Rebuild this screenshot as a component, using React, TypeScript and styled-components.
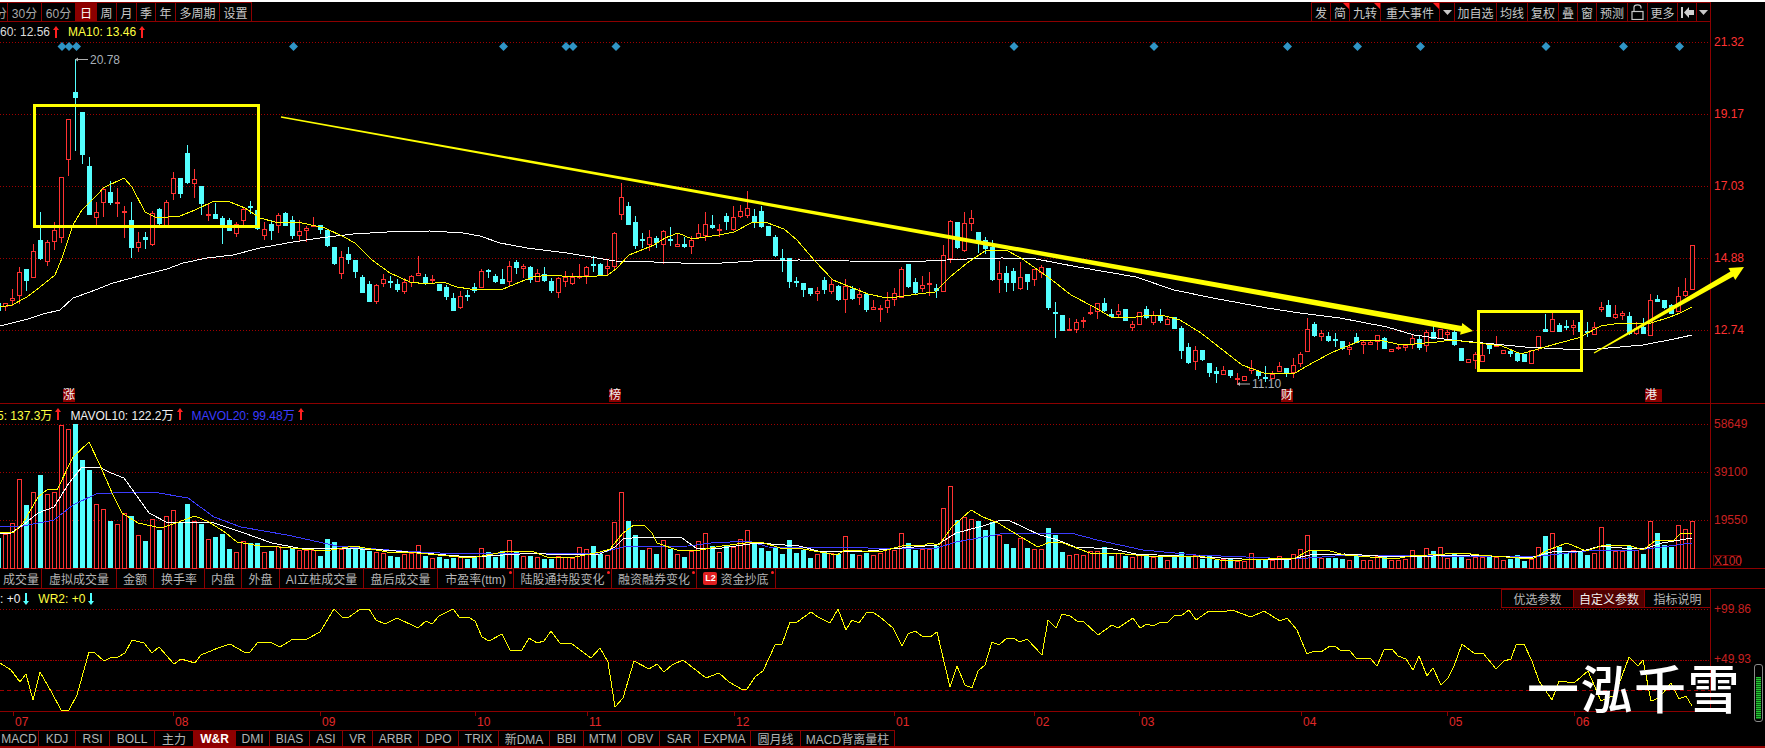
import React from "react";
import styled, { createGlobalStyle } from "styled-components";

const RED_LINE = "#8c0000";
const CANDLE_RED = "#ff3232";
const CANDLE_CYAN = "#54ffff";
const FONT = `"Liberation Sans", "Noto Sans CJK SC", sans-serif`;

const GlobalStyle = createGlobalStyle`
  html, body {
    margin: 0;
    padding: 0;
    background: #000;
  }
  * {
    box-sizing: border-box;
  }
`;

const Page = styled.div`
  position: relative;
  width: 1765px;
  height: 748px;
  overflow: hidden;
  background: #000;
  font-family: ${FONT};
  font-size: 12px;
  color: #c8c8c8;
  display: flex;
  flex-direction: column;
`;

const TopStrip = styled.div`
  height: 2px;
  background: #fff;
`;

const Toolbar = styled.div`
  width: 1711px;
  height: 20px;
  display: flex;
  justify-content: space-between;
  border-right: 1px solid ${RED_LINE};
  border-bottom: 1px solid ${RED_LINE};
`;

const ToolGroup = styled.div`
  display: flex;
  border-top: 1px solid ${RED_LINE};
`;

const ToolButton = styled.div<{ $w: number; $active?: boolean; $flag?: boolean; $dim?: boolean; $clip?: boolean }>`
  position: relative;
  width: ${(p) => p.$w}px;
  display: flex;
  align-items: center;
  justify-content: ${(p) => (p.$clip ? "flex-end" : "center")};
  overflow: hidden;
  white-space: nowrap;
  border-left: ${(p) => (p.$clip ? "none" : `1px solid ${RED_LINE}`)};
  background: ${(p) => (p.$active ? "#8c0000" : "transparent")};
  color: ${(p) => (p.$active ? "#fff" : p.$dim ? "#a8a8a8" : "#c8c8c8")};
  &::after {
    content: "";
    display: ${(p) => (p.$flag ? "block" : "none")};
    position: absolute;
    top: 0;
    right: 0;
    border-top: 6px solid #ff1e1e;
    border-left: 6px solid transparent;
  }
`;

const PanelRow = styled.div<{ $h: number; $line?: boolean }>`
  position: relative;
  height: ${(p) => p.$h}px;
  display: flex;
  border-bottom: ${(p) => (p.$line ? `1px solid ${RED_LINE}` : "none")};
`;

const PlotColumn = styled.div<{ $closed?: boolean }>`
  position: relative;
  width: 1711px;
  display: flex;
  flex-direction: column;
  border-right: 1px solid ${RED_LINE};
  border-bottom: ${(p) => (p.$closed ? `1px solid ${RED_LINE}` : "none")};
`;

const Legend = styled.div<{ $h: number }>`
  height: ${(p) => p.$h}px;
  display: flex;
  align-items: center;
  gap: 9px;
  white-space: nowrap;
`;

const LegendSplit = styled(Legend)`
  justify-content: space-between;
`;

const LegendItems = styled.div<{ $shift?: number }>`
  display: flex;
  align-items: center;
  gap: 9px;
  margin-left: ${(p) => p.$shift ?? 0}px;
`;

const LegendItem = styled.span<{ $color: string }>`
  display: flex;
  align-items: center;
  gap: 3px;
  color: ${(p) => p.$color};
`;

const ParamGroup = styled.div`
  display: flex;
  height: 19px;
  border-bottom: 1px solid ${RED_LINE};
  border-top: 1px solid ${RED_LINE};
`;

const ParamButton = styled.div<{ $w: number; $active?: boolean }>`
  width: ${(p) => p.$w}px;
  display: flex;
  align-items: center;
  justify-content: center;
  border-left: 1px solid ${RED_LINE};
  background: ${(p) => (p.$active ? "#500000" : "transparent")};
  color: ${(p) => (p.$active ? "#f0f0f0" : "#b8b8b8")};
`;

const Plot = styled.svg`
  display: block;
  flex: none;
  overflow: visible;
`;

const AxisColumn = styled.div<{ $top: number; $step: number; $dim?: boolean }>`
  position: relative;
  flex: 1;
  padding-top: ${(p) => p.$top}px;
  padding-left: 3px;
  display: grid;
  grid-auto-rows: ${(p) => p.$step}px;
  line-height: 15px;
  color: ${(p) => (p.$dim ? "#c82020" : CANDLE_RED)};
`;

const UnitBox = styled.div`
  position: absolute;
  left: 2px;
  bottom: 2px;
  height: 11px;
  width: 28px;
  border: 1px solid #6a0000;
  line-height: 10px;
  color: #d02828;
  text-align: center;
`;

const MarkerTag = styled.div<{ $x: number }>`
  position: absolute;
  left: ${(p) => p.$x}px;
  top: 367px;
  width: 12px;
  height: 13px;
  background: #8c0000;
  color: #f4f4f4;
  font-size: 12px;
  line-height: 13px;
  text-align: center;
`;

const TabStrip = styled.div`
  display: flex;
  height: 21px;
  border-top: 1px solid ${RED_LINE};
  border-bottom: 1px solid ${RED_LINE};
`;

const BottomStrip = styled.div`
  display: flex;
  height: 16px;
`;

const Tab = styled.div<{ $w: number; $active?: boolean; $clip?: boolean; $dot?: boolean }>`
  position: relative;
  width: ${(p) => p.$w}px;
  display: flex;
  align-items: center;
  justify-content: ${(p) => (p.$clip ? "flex-end" : "center")};
  gap: 2px;
  overflow: hidden;
  white-space: nowrap;
  padding-right: ${(p) => (p.$clip ? 2 : 0)}px;
  border-right: 1px solid ${RED_LINE};
  background: ${(p) => (p.$active ? "#8c0000" : "transparent")};
  color: ${(p) => (p.$active ? "#fff" : "#b4b4b4")};
  font-weight: ${(p) => (p.$active ? 700 : 400)};
  &::after {
    content: "";
    display: ${(p) => (p.$dot ? "block" : "none")};
    position: absolute;
    top: 2px;
    right: 1px;
    width: 3px;
    height: 3px;
    border-radius: 50%;
    background: #ff1e1e;
  }
`;

const BottomTab = styled(Tab)`
  border-top: 1px solid ${RED_LINE};
`;

const LevelTwo = styled.span`
  width: 14px;
  height: 13px;
  margin-right: 1px;
  border-radius: 2px;
  background: #e02020;
  color: #fff;
  font-size: 9px;
  font-weight: 700;
  line-height: 13px;
  text-align: center;
`;

const DateRow = styled.div`
  position: relative;
  height: 18px;
`;

const DateTick = styled.div<{ $x: number }>`
  position: absolute;
  left: ${(p) => p.$x}px;
  top: 0;
  height: 16px;
  padding: 3px 0 0 2px;
  color: #e02828;
  line-height: 14px;
  &::before {
    content: "";
    position: absolute;
    left: 0;
    top: 0;
    width: 1px;
    height: 4px;
    background: ${RED_LINE};
  }
`;

const FooterLine = styled.div`
  height: 2px;
  background: #990000;
`;

const Watermark = styled.div`
  position: absolute;
  left: 1527px;
  top: 650px;
  font-family: "Noto Sans CJK SC", sans-serif;
  font-size: 52px;
  font-weight: 500;
  letter-spacing: 1.5px;
  line-height: 74px;
  color: #fff;
  white-space: nowrap;
`;

const Gauge = styled.div`
  position: absolute;
  left: 1754px;
  top: 664px;
  width: 9px;
  height: 58px;
  padding: 12px 1px 2px;
  border: 1px solid #8a8a8a;
  border-radius: 3px;
`;

const GaugeFill = styled.div`
  height: 100%;
  background: repeating-linear-gradient(to bottom, #22c832 0 1px, #0c5a14 1px 2px);
`;

// toolbar contents
const LEFT_TOOLS = [
  { t: "分", w: 7, clip: true, dim: true },
  { t: "30分", w: 34, dim: true },
  { t: "60分", w: 34, dim: true },
  { t: "日", w: 21, active: true },
  { t: "周", w: 20 },
  { t: "月", w: 20 },
  { t: "季", w: 19 },
  { t: "年", w: 20 },
  { t: "多周期", w: 44 },
  { t: "设置", w: 32 },
];

const RIGHT_TOOLS = [
  { t: "发", w: 19 },
  { t: "简", w: 19, flag: true },
  { t: "九转", w: 31, flag: true },
  { t: "重大事件", w: 59, flag: true },
];

const RIGHT_TOOLS_2 = [
  { t: "加自选", w: 42 },
  { t: "均线", w: 31 },
  { t: "复权", w: 31 },
  { t: "叠", w: 19 },
  { t: "窗", w: 19 },
  { t: "预测", w: 31 },
];

const VOL_TABS = [
  { t: "成交量", w: 42, clip: true },
  { t: "虚拟成交量", w: 75 },
  { t: "金额", w: 37 },
  { t: "换手率", w: 51 },
  { t: "内盘", w: 37 },
  { t: "外盘", w: 38 },
  { t: "AI立桩成交量", w: 84 },
  { t: "盘后成交量", w: 74 },
  { t: "市盈率(ttm)", w: 76, dot: true },
  { t: "陆股通持股变化", w: 98, dot: true },
  { t: "融资融券变化", w: 85, dot: true },
  { t: "资金抄底", w: 79, dot: true, l2: true },
];

const WR_TABS = [
  { t: "MACD", w: 39 },
  { t: "KDJ", w: 37 },
  { t: "RSI", w: 34 },
  { t: "BOLL", w: 45 },
  { t: "主力", w: 39 },
  { t: "W&R", w: 42, active: true },
  { t: "DMI", w: 34 },
  { t: "BIAS", w: 40 },
  { t: "ASI", w: 33 },
  { t: "VR", w: 30 },
  { t: "ARBR", w: 46 },
  { t: "DPO", w: 40 },
  { t: "TRIX", w: 40 },
  { t: "新DMA", w: 51 },
  { t: "BBI", w: 34 },
  { t: "MTM", w: 38 },
  { t: "OBV", w: 38 },
  { t: "SAR", w: 39 },
  { t: "EXPMA", w: 52 },
  { t: "圆月线", w: 50 },
  { t: "MACD背离量柱", w: 94 },
];

const DATES = [
  ["07", 13], ["08", 173], ["09", 320], ["10", 475], ["11", 587], ["12", 734],
  ["01", 894], ["02", 1034], ["03", 1139], ["04", 1301], ["05", 1447], ["06", 1574],
] as const;

const MARKERS = [["涨", 63], ["榜", 609], ["财", 1281], ["", 1650], ["港", 1645]] as const;

const DIAMONDS = [62, 69, 76.5, 293.5, 503.5, 566, 573, 616, 1014, 1154, 1287.5, 1357.5, 1420.5, 1546, 1623.5, 1679.5];

// daily bars, page pixels: high, body top, body bottom, low, 1 = up day. First one sits cut off at the left edge
const CANDLES: number[][] = [
  [303,303,310,310,0],
  [303,303,306,310,1],[289,298,300,305,1],[267,272,295,303,1],[269,269,280,290,0],[244,251,277,277,1],
  [212,240,258,259,0],[240,242,261,265,1],[222,230,241,249,1],[177,177,237,242,1],[119,119,159,175,1],
  [59,92,97,150,0],[112,112,154,163,0],[157,166,214,214,0],[202,212,217,225,1],[188,189,202,216,1],
  [181,192,202,204,0],[188,202,203,216,1],[206,211,212,237,1],[202,220,247,257,0],[232,242,247,251,1],
  [232,237,239,248,0],[211,213,244,245,1],[208,209,223,224,0],[200,202,225,225,1],[172,178,193,199,1],
  [178,178,193,197,0],[145,153,182,183,0],[169,179,183,197,1],[186,186,203,214,0],[203,214,215,220,1],
  [203,214,218,218,0],[216,218,224,243,0],[218,220,230,230,0],[222,224,233,236,1],[208,209,220,225,1],
  [201,206,207,213,0],[210,210,228,229,0],[222,229,235,239,1],[220,224,230,239,0],[213,215,225,232,1],
  [212,213,225,225,0],[216,220,235,238,0],[220,231,235,240,1],[226,228,230,241,1],[217,225,226,226,1],
  [225,225,229,233,0],[229,230,245,246,0],[247,247,263,264,0],[251,257,273,278,1],[247,254,259,263,0],
  [260,260,271,277,0],[275,277,292,292,0],[281,284,301,301,0],[284,285,301,303,1],[274,279,283,286,1],
  [276,281,282,287,0],[279,284,289,291,0],[278,282,291,293,1],[275,276,282,286,1],[256,273,275,275,1],
  [274,277,283,284,0],[275,279,280,282,1],[284,284,290,290,0],[285,287,296,299,0],[293,298,310,310,0],
  [291,296,307,308,1],[290,295,296,300,0],[283,287,290,292,0],[269,271,287,287,1],[269,270,271,277,0],
  [274,276,281,282,0],[269,279,283,283,0],[261,266,281,286,1],[260,262,267,273,0],[264,266,268,277,1],
  [266,267,279,282,0],[269,273,281,281,1],[267,274,280,281,0],[278,281,290,292,0],[277,278,292,297,1],
  [271,277,281,286,1],[273,277,283,284,1],[264,276,277,278,1],[266,267,275,283,1],[256,264,265,271,0],
  [263,264,274,274,0],[260,266,268,274,1],[232,233,266,270,1],[183,197,214,219,1],[202,206,224,224,0],
  [216,222,245,248,0],[233,239,240,247,0],[230,237,244,250,1],[236,238,242,247,0],[230,231,244,263,1],
  [227,239,240,245,0],[233,244,246,246,1],[237,244,246,247,0],[236,240,246,253,1],[224,233,237,238,1],
  [212,224,235,240,1],[215,225,227,228,0],[224,229,230,236,1],[213,216,221,229,0],[206,217,229,230,1],
  [205,211,216,217,1],[191,208,215,217,1],[209,216,221,227,0],[206,211,226,227,0],[226,226,235,235,0],
  [235,237,255,256,0],[249,258,259,271,0],[258,258,281,287,0],[277,281,282,286,0],[283,283,289,296,0],
  [288,288,293,295,0],[287,291,293,300,1],[277,280,289,293,0],[278,284,291,293,1],[285,286,299,300,0],
  [279,286,299,312,1],[286,289,298,299,0],[288,294,297,304,1],[294,294,309,311,0],[300,307,309,309,1],
  [305,308,309,321,1],[292,300,307,312,1],[288,293,299,305,1],[267,269,297,297,1],[264,264,286,287,0],
  [278,282,292,294,0],[276,285,288,291,1],[272,283,284,295,1],[284,288,290,297,0],[245,255,291,291,1],
  [220,221,258,262,1],[222,222,247,248,0],[212,223,250,251,1],[210,218,223,230,1],[232,232,240,252,0],
  [237,240,248,253,0],[240,247,279,280,0],[261,273,279,292,1],[266,273,282,291,0],[268,271,282,290,0],
  [262,277,288,289,1],[274,274,281,289,0],[269,269,279,285,1],[265,267,272,277,1],[268,268,307,309,0],
  [302,312,313,337,0],[315,315,330,330,0],[318,329,330,330,1],[319,322,329,332,1],[317,320,321,327,1],
  [305,312,313,314,1],[303,303,311,318,1],[298,303,310,311,0],[309,314,316,317,0],[304,311,314,316,1],
  [309,309,320,320,0],[321,324,327,330,1],[312,312,324,324,1],[306,309,317,318,0],[311,315,322,324,1],
  [309,315,320,322,0],[317,319,324,324,1],[317,317,328,328,0],[326,328,350,358,0],[343,347,362,363,0],
  [346,350,361,369,1],[350,350,359,360,0],[363,363,372,376,0],[367,371,373,382,0],[366,370,374,374,1],
  [370,370,375,377,0],[373,378,379,384,1],[376,376,380,380,1],[360,368,370,373,1],[371,371,375,378,0],
  [366,377,378,381,0],[371,374,378,378,1],[362,366,371,371,1],[368,368,372,376,0],[358,365,372,377,1],
  [352,354,363,366,1],[318,329,351,351,1],[322,324,335,336,0],[330,333,336,340,1],[332,336,340,341,0],
  [333,339,340,346,0],[341,341,348,349,0],[342,347,349,354,1],[333,337,342,342,0],[340,342,344,353,1],
  [340,342,344,344,1],[335,335,341,349,1],[337,338,348,348,0],[349,349,351,351,1],[345,347,348,349,1],
  [345,345,347,350,1],[334,338,344,348,1],[335,339,347,349,0],[330,332,345,351,1],[326,332,338,338,0],
  [329,329,338,338,1],[330,332,334,338,1],[328,332,344,345,0],[348,348,360,360,0],[359,359,362,362,1],
  [352,354,360,368,1],[342,355,361,361,1],[344,345,348,353,0],[336,345,346,346,1],[350,350,353,353,1],
  [350,351,353,356,0],[353,353,360,361,0],[354,354,361,361,0],[350,350,363,363,1],[336,336,347,350,1],
  [314,329,331,331,0],[312,319,331,331,1],[323,325,331,331,0],[320,326,327,329,0],[320,325,327,334,1],
  [322,322,331,331,0],[322,331,332,336,0],[322,327,334,334,1],[302,307,309,311,1],[300,305,316,316,0],
  [305,314,317,318,1],[311,313,315,319,1],[312,316,333,334,0],[322,328,333,334,1],[318,327,333,333,0],
  [294,300,335,335,1],[295,299,301,301,0],[300,300,307,308,0],[304,305,313,313,0],[287,296,311,311,1],
  [278,291,295,296,1],[245,245,289,289,1],
];

// top of each volume bar, same order as CANDLES
const VOLUMES = [
  538,534,523,479,505,492,475,494,492,425,429,424,460,470,504,509,521,524,513,516,535,541,519,530,516,510,523,504,
  521,524,539,537,534,549,552,541,543,543,552,551,546,550,548,550,550,550,556,539,542,549,548,548,548,551,552,553,
  556,557,554,553,545,556,558,557,559,558,556,559,557,548,552,557,551,540,552,556,556,557,559,559,556,557,558,547,
  549,546,554,555,522,492,521,535,550,548,554,540,549,554,557,551,541,533,546,552,545,547,539,530,543,548,551,548,
  554,540,553,550,558,554,552,553,554,536,554,555,553,555,553,549,550,533,543,550,549,549,546,508,486,520,517,519,
  521,530,522,535,544,548,538,548,549,549,528,535,552,555,554,555,551,551,547,556,553,556,557,555,556,557,557,560,
  557,552,557,555,559,556,560,559,559,561,561,553,560,560,560,556,559,554,549,535,550,558,558,558,559,560,555,560,
  560,556,555,560,560,559,550,556,548,551,547,558,553,555,559,557,557,557,557,560,559,555,561,559,547,536,533,547,
  553,550,551,555,553,527,544,551,551,546,550,554,521,533,545,547,525,529,521,
];

const MA10 = "0,307 12,305 27,297 40,287 55,275 62,258 68,240 73,225 82,210 90,202 100,192 103,188 124,178 132,187 145,212 157,218 180,216 195,210 214,201 230,202 245,208 260,218 275,222 302,223 325,228 344,237 355,243 372,260 390,273 410,282 427,284 443,282 457,287 470,289 503,289 520,282 533,277 550,275 573,277 597,276 608,275 617,268 629,255 654,245 665,238 678,233 692,239 719,235 734,232 753,222 765,222 784,229 797,240 814,260 833,280 853,288 868,294 887,298 897,297 918,294 935,292 950,277 967,263 985,251 1006,250 1021,258 1052,280 1071,295 1094,307 1111,317 1136,317 1151,315 1165,316 1180,320 1201,333 1242,365 1264,373 1295,373 1314,362 1333,352 1360,341 1379,340 1402,345 1437,342 1452,340 1486,344 1502,346 1521,354 1538,349 1559,343 1578,338 1601,326 1620,323 1651,323 1670,317 1680,313 1692,307";
const MA60 = "0,326 28,319 43,314 60,310 73,298 90,292 113,283 143,275 167,269 183,263 207,258 233,255 260,248 293,242 320,238 353,234 387,232 430,231 463,233 480,236 500,243 527,248 567,253 597,258 615,261 654,262 707,264 753,261 799,260 849,261 906,262 967,259 1002,258 1036,259 1078,267 1136,277 1174,290 1213,298 1267,308 1300,313 1340,318 1387,327 1414,335 1452,340 1483,343 1525,347 1563,349 1597,349 1643,345 1674,339 1692,335";
const MAVOL5 = "0,532 13,533 23,523 38,497 48,489 57,490 73,457 89,442 99,463 113,495 122,513 138,523 161,528 176,523 195,516 209,522 226,533 237,542 260,546 279,547 325,551 354,546 387,552 417,553 459,557 471,558 509,551 534,552 547,557 570,558 600,552 610,549 623,533 634,525 644,525 652,533 657,543 677,550 700,550 722,546 745,543 761,542 780,548 803,549 837,555 845,550 879,552 906,545 925,545 929,543 939,545 952,527 971,510 983,517 998,523 1021,537 1038,547 1050,542 1063,543 1090,553 1113,553 1136,555 1162,557 1200,556 1220,560 1242,560 1295,558 1310,550 1326,550 1345,555 1395,559 1410,556 1463,553 1479,555 1532,559 1548,550 1567,543 1586,551 1601,546 1628,545 1643,550 1655,541 1674,540 1680,534 1692,533";
const MAVOL10 = "0,533 11,533 23,525 38,513 54,507 69,483 82,467 99,467 111,473 124,478 134,492 149,513 168,523 191,522 214,523 241,532 272,543 298,548 337,548 383,550 421,553 471,557 536,553 555,555 600,554 615,547 623,539 642,537 654,538 671,537 682,538 696,548 722,548 757,543 799,546 822,552 868,551 902,548 937,545 956,533 983,526 998,521 1008,520 1040,535 1055,539 1075,547 1113,549 1136,554 1200,557 1242,559 1291,559 1310,555 1345,554 1395,557 1471,555 1529,558 1552,552 1582,551 1601,546 1632,549 1647,548 1662,543 1692,538";
const MAVOL20 = "0,527 23,526 54,520 73,505 96,494 130,492 153,492 188,498 214,517 241,527 287,535 337,546 402,551 459,554 600,553 623,547 688,546 711,543 749,541 768,547 868,548 937,548 956,542 1006,533 1071,533 1097,540 1143,550 1196,555 1295,559 1349,555 1532,557 1586,551 1639,550 1692,543";
const WR1 = "0,663 11,670 20,682 26,674 33,700 40,672 52,693 61,710 69,710 77,695 89,652 95,653 104,661 112,657 118,657 125,653 132,640 144,643 152,653 159,647 174,664 181,659 195,663 201,655 218,648 230,644 244,652 250,652 258,642 270,642 280,647 293,639 307,639 320,632 334,609 342,617 349,617 359,610 369,609 376,620 385,624 397,618 418,628 426,621 432,624 439,616 453,609 460,618 468,617 475,621 482,637 489,641 502,634 510,650 522,650 529,638 537,643 544,641 551,631 560,643 571,643 591,658 600,648 608,662 615,707 623,698 634,661 649,669 657,664 664,672 672,665 683,660 706,678 719,673 729,682 743,690 747,689 755,677 763,671 775,645 782,644 790,622 797,622 811,612 818,617 830,623 838,609 846,630 852,620 859,623 867,612 874,613 880,617 893,628 902,646 908,634 915,631 922,636 930,637 937,632 950,687 957,666 965,685 972,688 978,671 985,665 992,642 999,645 1007,638 1013,638 1020,642 1027,639 1042,655 1048,620 1056,628 1062,614 1070,616 1077,621 1083,621 1098,635 1112,625 1118,628 1127,622 1133,618 1140,628 1147,624 1153,626 1161,622 1167,623 1175,615 1182,615 1189,610 1196,620 1209,611 1222,612 1232,610 1251,617 1264,611 1280,621 1287,618 1297,630 1307,654 1314,651 1321,652 1330,646 1335,646 1341,651 1349,650 1356,658 1370,658 1377,666 1384,650 1392,649 1398,656 1406,659 1413,670 1419,656 1427,676 1433,668 1441,685 1448,678 1454,666 1462,644 1475,654 1483,653 1496,669 1504,661 1511,659 1516,645 1524,644 1532,661 1539,681 1552,700 1559,681 1574,683 1588,671 1601,701 1615,695 1629,657 1638,666 1643,660 1651,701 1659,698 1671,683 1679,699 1686,696 1692,706";

const candleX = (i: number) => -1.5 + 7 * i;

const Candles = () => (
  <g shapeRendering="crispEdges">
    {CANDLES.map(([hi, top, bot, lo, up], i) => {
      const x = candleX(i);
      const color = up ? CANDLE_RED : CANDLE_CYAN;
      return (
        <g key={i}>
          <line x1={x} x2={x} y1={hi} y2={lo + 1} stroke={color} />
          {up ? (
            <rect x={x - 2} y={top + 0.5} width={4} height={Math.max(bot - top, 1)} fill="#000" stroke={color} />
          ) : (
            <rect x={x - 2.5} y={top} width={5} height={Math.max(bot - top, 1) + 1} fill={color} />
          )}
        </g>
      );
    })}
  </g>
);

const VolumeBars = () => (
  <g shapeRendering="crispEdges">
    {VOLUMES.map((top, i) => {
      const x = candleX(i);
      const up = CANDLES[i] && CANDLES[i][4];
      return up ? (
        <rect key={i} x={x - 2} y={top + 0.5} width={4} height={568 - top} fill="#000" stroke={CANDLE_RED} />
      ) : (
        <rect key={i} x={x - 2.5} y={top} width={5} height={568 - top} fill={CANDLE_CYAN} />
      );
    })}
  </g>
);

const GridLine = ({ y, dash = "1 2" }: { y: number; dash?: string }) => (
  <line x1={0} x2={1710} y1={y} y2={y} stroke="#a00000" strokeDasharray={dash} shapeRendering="crispEdges" />
);

const Trace = ({ points, color }: { points: string; color: string }) => (
  <polyline points={points} fill="none" stroke={color} strokeWidth={1} shapeRendering="crispEdges" />
);

// line that grows from thin to thick and ends in a head, like the ones drawn by hand on the chart
const taperedArrow = (ax: number, ay: number, tx: number, ty: number, w0: number, w1: number, head: number, headW: number) => {
  const len = Math.hypot(tx - ax, ty - ay);
  const ux = (tx - ax) / len;
  const uy = (ty - ay) / len;
  const nx = -uy;
  const ny = ux;
  const bx = tx - ux * head;
  const by = ty - uy * head;
  const pts = [
    [ax + nx * w0, ay + ny * w0],
    [bx + nx * w1, by + ny * w1],
    [bx + nx * headW, by + ny * headW],
    [tx, ty],
    [bx - nx * headW, by - ny * headW],
    [bx - nx * w1, by - ny * w1],
    [ax - nx * w0, ay - ny * w0],
  ];
  return pts.map((p) => p.map((v) => v.toFixed(1)).join(",")).join(" ");
};

const Callout = ({ x, y, value }: { x: number; y: number; value: string }) => (
  <g>
    <line x1={x} x2={x + 12} y1={y} y2={y} stroke="#b0b0b0" />
    <path d={`M${x - 1} ${y}l3 -2v4z`} fill="#b0b0b0" />
    <text x={x + 14} y={y + 4} fill="#a8b0b8" fontSize={12} fontFamily={FONT}>
      {value}
    </text>
  </g>
);

const ArrowMark = ({ up, color }: { up: boolean; color: string }) => (
  <svg width={6} height={12} viewBox="0 0 6 12">
    <path d={up ? "M3 0L6 4H4V12H2V4H0Z" : "M3 12L6 8H4V0H2V8H0Z"} fill={color} />
  </svg>
);

const Caret = () => (
  <svg width={9} height={5} viewBox="0 0 9 5">
    <path d="M0 0H9L4.5 5Z" fill="#c8c8c8" />
  </svg>
);

const LockIcon = () => (
  <svg width={13} height={16} viewBox="0 0 13 16" fill="none" stroke="#c8c8c8" strokeWidth={1.2}>
    <rect x={1} y={7.5} width={11} height={8} />
    <path d="M3 7.5V3.5C3 1.5 4.5 .8 6.5 .8S10 1.5 10 3.5V4.5" />
  </svg>
);

const PanelCollapseIcon = () => (
  <svg width={13} height={11} viewBox="0 0 13 11" fill="#d0d0d0">
    <rect x={0} y={0} width={2} height={11} />
    <path d="M8 0V11L3 5.5Z" />
    <rect x={8} y={3} width={5} height={5} />
  </svg>
);

const App = () => (
  <Page>
    <GlobalStyle />
    <TopStrip />
    <Toolbar>
      <ToolGroup>
        {LEFT_TOOLS.map((b) => (
          <ToolButton key={b.t} $w={b.w} $active={b.active} $clip={b.clip} $dim={b.dim}>
            {b.t}
          </ToolButton>
        ))}
        <ToolButton $w={1} />
      </ToolGroup>
      <ToolGroup>
        {RIGHT_TOOLS.map((b) => (
          <ToolButton key={b.t} $w={b.w} $flag={b.flag}>
            {b.t}
          </ToolButton>
        ))}
        <ToolButton $w={15}>
          <Caret />
        </ToolButton>
        {RIGHT_TOOLS_2.map((b) => (
          <ToolButton key={b.t} $w={b.w}>
            {b.t}
          </ToolButton>
        ))}
        <ToolButton $w={20}>
          <LockIcon />
        </ToolButton>
        <ToolButton $w={30}>更多</ToolButton>
        <ToolButton $w={19}>
          <PanelCollapseIcon />
        </ToolButton>
        <ToolButton $w={14}>
          <Caret />
        </ToolButton>
      </ToolGroup>
    </Toolbar>

    <PanelRow $h={382} $line>
      <PlotColumn>
        <Legend $h={20}>
          <LegendItem $color="#dcdcdc">
            60: 12.56 <ArrowMark up color="#ff2020" />
          </LegendItem>
          <LegendItem $color="#ffff40">
            MA10: 13.46 <ArrowMark up color="#ff2020" />
          </LegendItem>
        </Legend>
        <Plot width={1710} height={361} viewBox="0 42 1710 361">
          {[42.5, 114.5, 186.5, 258.5, 330.5].map((y) => (
            <GridLine key={y} y={y} />
          ))}
          {DIAMONDS.map((x) => (
            <path key={x} d={`M${x} 42l4.5 4.5l-4.5 4.5l-4.5 -4.5z`} fill="#2f95c6" />
          ))}
          <Candles />
          <Trace points={MA60} color="#ffffff" />
          <Trace points={MA10} color="#ffff00" />
          <Callout x={76} y={59.5} value="20.78" />
          <Callout x={1238} y={384} value="11.10" />
          <g fill="none" stroke="#ffff00" strokeWidth={3} shapeRendering="crispEdges">
            <rect x={34} y={105} width={224} height={121} />
            <rect x={1478} y={311} width={103} height={59} />
          </g>
          <polygon points={taperedArrow(281, 117, 1473, 331, 0.7, 3, 12, 6)} fill="#ffff00" />
          <polygon points={taperedArrow(1594, 353, 1744, 267, 0.7, 3, 14, 7)} fill="#ffff00" />
        </Plot>
        {MARKERS.map(([t, x]) => (
          <MarkerTag key={x} $x={x}>
            {t}
          </MarkerTag>
        ))}
      </PlotColumn>
      <AxisColumn $top={13} $step={72}>
        <span>21.32</span>
        <span>19.17</span>
        <span>17.03</span>
        <span>14.88</span>
        <span>12.74</span>
      </AxisColumn>
    </PanelRow>

    <PanelRow $h={164}>
      <PlotColumn>
        <Legend $h={20}>
          <LegendItems $shift={-3}>
            <LegendItem $color="#ffff40">
              5: 137.3万 <ArrowMark up color="#ff2020" />
            </LegendItem>
            <LegendItem $color="#f0f0f0">
              MAVOL10: 122.2万 <ArrowMark up color="#ff2020" />
            </LegendItem>
            <LegendItem $color="#3c3cff">
              MAVOL20: 99.48万 <ArrowMark up color="#ff2020" />
            </LegendItem>
          </LegendItems>
        </Legend>
        <Plot width={1710} height={144} viewBox="0 424 1710 144">
          {[424.5, 472.5, 520.5].map((y) => (
            <GridLine key={y} y={y} />
          ))}
          <VolumeBars />
          <Trace points={MAVOL20} color="#3c3cff" />
          <Trace points={MAVOL10} color="#ffffff" />
          <Trace points={MAVOL5} color="#ffff00" />
        </Plot>
      </PlotColumn>
      <AxisColumn $top={13} $step={48} $dim>
        <span>58649</span>
        <span>39100</span>
        <span>19550</span>
        <UnitBox>X100</UnitBox>
      </AxisColumn>
    </PanelRow>

    <TabStrip>
      {VOL_TABS.map((b) => (
        <Tab key={b.t} $w={b.w} $clip={b.clip} $dot={b.dot}>
          {b.l2 && <LevelTwo>L2</LevelTwo>}
          {b.t}
        </Tab>
      ))}
    </TabStrip>

    <PanelRow $h={123}>
      <PlotColumn $closed>
        <LegendSplit $h={19}>
          <LegendItems>
            <LegendItem $color="#f0f0f0">
              : +0 <ArrowMark up={false} color={CANDLE_CYAN} />
            </LegendItem>
            <LegendItem $color="#ffff40">
              WR2: +0 <ArrowMark up={false} color={CANDLE_CYAN} />
            </LegendItem>
          </LegendItems>
          <ParamGroup>
            <ParamButton $w={72}>优选参数</ParamButton>
            <ParamButton $w={71} $active>
              自定义参数
            </ParamButton>
            <ParamButton $w={66}>指标说明</ParamButton>
          </ParamGroup>
        </LegendSplit>
        <Plot width={1710} height={103} viewBox="0 608 1710 103">
          <GridLine y={609.5} />
          <GridLine y={660.5} dash="2 1 1 1" />
          <GridLine y={690.5} dash="4 3" />
          <Trace points={WR1} color="#ffff00" />
        </Plot>
      </PlotColumn>
      <AxisColumn $top={13} $step={50} $dim>
        <span>+99.86</span>
        <span>+49.93</span>
      </AxisColumn>
    </PanelRow>

    <DateRow>
      {DATES.map(([d, x]) => (
        <DateTick key={d} $x={x}>
          {d}
        </DateTick>
      ))}
    </DateRow>

    <BottomStrip>
      {WR_TABS.map((b) => (
        <BottomTab key={b.t} $w={b.w} $active={b.active}>
          {b.t}
        </BottomTab>
      ))}
    </BottomStrip>
    <FooterLine />

    <Watermark>一泓千雪</Watermark>
    <Gauge>
      <GaugeFill />
    </Gauge>
  </Page>
);

export default App;
